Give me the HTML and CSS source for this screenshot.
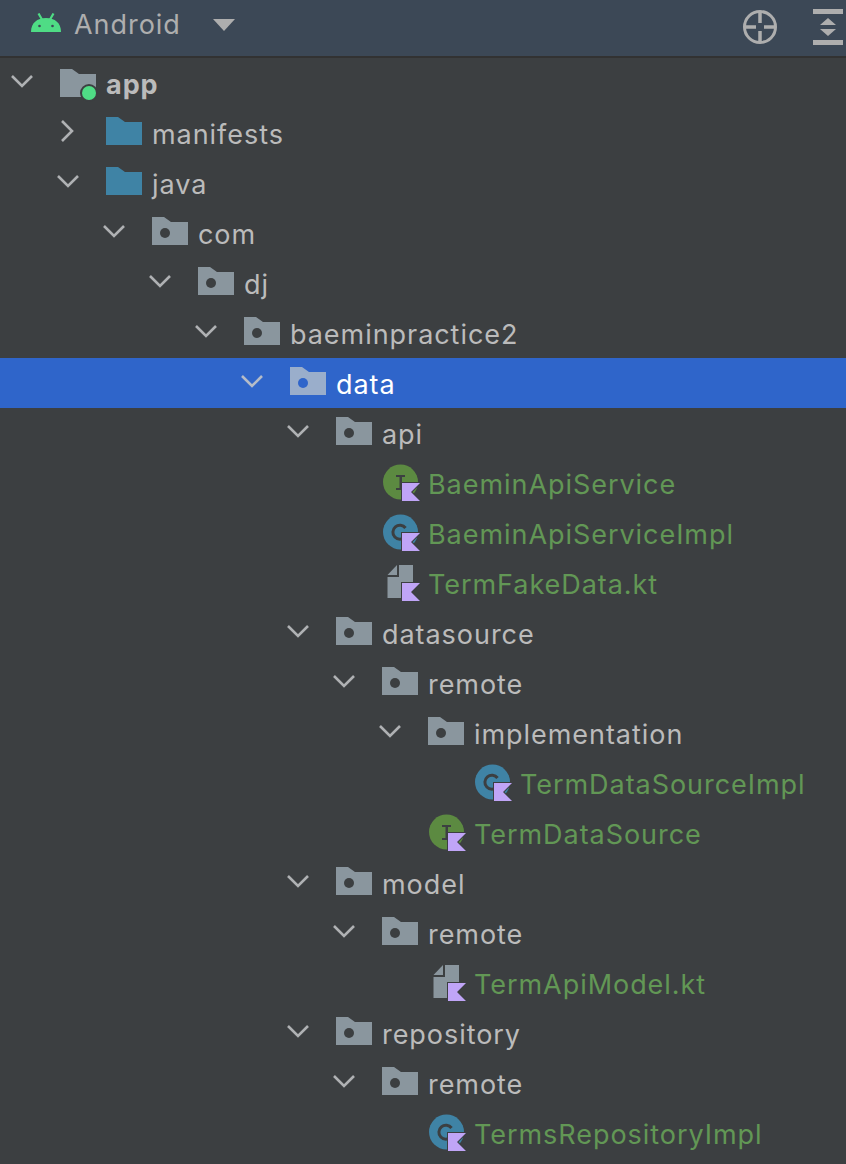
FILE: index.html
```html
<!DOCTYPE html>
<html lang="en">
<head>
<meta charset="utf-8">
<title>Project</title>
<link rel="stylesheet" href="styles.css">
</head>
<body>
<svg class="defs" width="0" height="0" aria-hidden="true">
  <defs>
    <symbol id="chev-down" viewBox="0 0 24 14"><path d="M2 2L12 12L22 2" fill="none" stroke="currentColor" stroke-width="2.6"/></symbol>
    <symbol id="chev-right" viewBox="0 0 24 24"><path d="M6 2L16 12L6 22" fill="none" stroke="currentColor" stroke-width="2.6"/></symbol>
    <symbol id="folder-shape" viewBox="0 0 36 28"><path d="M0 0H12L19 5H36V28H0Z" fill="currentColor"/></symbol>
    <symbol id="folder-pkg" viewBox="0 0 36 28"><path d="M0 0H12L19 5H36V28H0Z" fill="currentColor"/><circle cx="13" cy="16" r="5" fill="var(--dot)"/></symbol>
    <symbol id="kt" viewBox="0 0 40 40"><path d="M20 20H38L29 29L38 38H20Z" fill="#c0a5f7" stroke="#3c3f41" stroke-width="2" paint-order="stroke"/></symbol>
    <symbol id="i-iface" viewBox="0 0 40 40">
      <circle cx="18.5" cy="19" r="17.5" fill="#5c8a41"/>
      <path d="M14 12H23V14H20V25H22V27H14V25H17.500V14H14Z" fill="#3c3f41"/>
      <use href="#kt"/>
    </symbol>
    <symbol id="i-class" viewBox="0 0 40 40">
      <circle cx="18.5" cy="19" r="17.5" fill="#3f83a5"/>
      <path d="M23.500 15A7 7 0 1 0 23 24" fill="none" stroke="#3c3f41" stroke-width="3"/>
      <use href="#kt"/>
    </symbol>
    <symbol id="i-file" viewBox="0 0 40 40">
      <path d="M5.500 12L15 2V12Z" fill="#8a969e"/>
      <path d="M17 2H31V21H20V35H5.500V14H17Z" fill="#8a969e"/>
      <use href="#kt"/>
    </symbol>
  </defs>
</svg>

<header class="bar">
  <div class="bar-left">
    <svg class="android" viewBox="0 0 30 19" aria-hidden="true">
      <path d="M7.500 0.500L11 6.500M22.500 0.500L19 6.500" stroke="#4fdc85" stroke-width="2.200" fill="none"/>
      <path d="M0 19C0 10 6 5 15 5S30 10 30 19Z" fill="#4fdc85"/>
      <circle cx="8.500" cy="13" r="1.300" fill="#3c4856"/><circle cx="21.500" cy="13" r="1.300" fill="#3c4856"/>
    </svg>
    <span class="bar-title">Android</span>
    <svg class="caret" viewBox="0 0 22 12" aria-hidden="true"><path d="M0 0H22L11 12Z" fill="#aeaeae"/></svg>
  </div>
  <div class="bar-right">
    <svg class="locate" viewBox="0 0 36 36" aria-hidden="true">
      <circle cx="18" cy="18" r="15.500" fill="none" stroke="#aeaeae" stroke-width="3"/>
      <path d="M18 3V14M18 22V33M3 18H14M22 18H33" stroke="#aeaeae" stroke-width="3.500"/>
    </svg>
    <svg class="collapse" viewBox="0 0 30 36" aria-hidden="true">
      <path d="M0 0H30V5H0ZM0 31H30V36H0Z" fill="#aeaeae"/>
      <path d="M15 9L23 16H7ZM15 27L7 20H23Z" fill="#aeaeae"/>
    </svg>
  </div>
</header>

<ul class="tree">
  <li class="row d0"><svg class="chev"><use href="#chev-down"/></svg><svg class="folder module"><use href="#folder-shape"/></svg><span class="name bold">app</span><span class="module-dot"></span></li>
  <li class="row d1"><svg class="chev right"><use href="#chev-right"/></svg><svg class="folder src"><use href="#folder-shape"/></svg><span class="name">manifests</span></li>
  <li class="row d1"><svg class="chev"><use href="#chev-down"/></svg><svg class="folder src"><use href="#folder-shape"/></svg><span class="name">java</span></li>
  <li class="row d2"><svg class="chev"><use href="#chev-down"/></svg><svg class="folder"><use href="#folder-pkg"/></svg><span class="name">com</span></li>
  <li class="row d3"><svg class="chev"><use href="#chev-down"/></svg><svg class="folder"><use href="#folder-pkg"/></svg><span class="name">dj</span></li>
  <li class="row d4"><svg class="chev"><use href="#chev-down"/></svg><svg class="folder"><use href="#folder-pkg"/></svg><span class="name">baeminpractice2</span></li>
  <li class="row d5 selected"><svg class="chev"><use href="#chev-down"/></svg><svg class="folder"><use href="#folder-pkg"/></svg><span class="name">data</span></li>
  <li class="row d6"><svg class="chev"><use href="#chev-down"/></svg><svg class="folder"><use href="#folder-pkg"/></svg><span class="name">api</span></li>
  <li class="row d7 leaf"><svg class="file"><use href="#i-iface"/></svg><span class="name vcs">BaeminApiService</span></li>
  <li class="row d7 leaf"><svg class="file"><use href="#i-class"/></svg><span class="name vcs">BaeminApiServiceImpl</span></li>
  <li class="row d7 leaf"><svg class="file"><use href="#i-file"/></svg><span class="name vcs">TermFakeData.kt</span></li>
  <li class="row d6"><svg class="chev"><use href="#chev-down"/></svg><svg class="folder"><use href="#folder-pkg"/></svg><span class="name">datasource</span></li>
  <li class="row d7"><svg class="chev"><use href="#chev-down"/></svg><svg class="folder"><use href="#folder-pkg"/></svg><span class="name">remote</span></li>
  <li class="row d8"><svg class="chev"><use href="#chev-down"/></svg><svg class="folder"><use href="#folder-pkg"/></svg><span class="name">implementation</span></li>
  <li class="row d9 leaf"><svg class="file"><use href="#i-class"/></svg><span class="name vcs">TermDataSourceImpl</span></li>
  <li class="row d8 leaf"><svg class="file"><use href="#i-iface"/></svg><span class="name vcs">TermDataSource</span></li>
  <li class="row d6"><svg class="chev"><use href="#chev-down"/></svg><svg class="folder"><use href="#folder-pkg"/></svg><span class="name">model</span></li>
  <li class="row d7"><svg class="chev"><use href="#chev-down"/></svg><svg class="folder"><use href="#folder-pkg"/></svg><span class="name">remote</span></li>
  <li class="row d8 leaf"><svg class="file"><use href="#i-file"/></svg><span class="name vcs">TermApiModel.kt</span></li>
  <li class="row d6"><svg class="chev"><use href="#chev-down"/></svg><svg class="folder"><use href="#folder-pkg"/></svg><span class="name">repository</span></li>
  <li class="row d7"><svg class="chev"><use href="#chev-down"/></svg><svg class="folder"><use href="#folder-pkg"/></svg><span class="name">remote</span></li>
  <li class="row d8 leaf"><svg class="file"><use href="#i-class"/></svg><span class="name vcs">TermsRepositoryImpl</span></li>
</ul>
</body>
</html>
```

FILE: styles.css
```css
* { box-sizing: border-box; }
html, body { margin: 0; height: 100%; overflow: hidden; }
body {
  background: #3c3f41;
  color: #bbbbbb;
  font-family: "Inter", "Liberation Sans", sans-serif;
  font-size: 27px;
  letter-spacing: 0.95px;
  --dot: #3c3f41;
}
.defs { position: absolute; }

.bar {
  height: 58px;
  background: #3c4856;
  border-bottom: 2px solid #323232;
  display: flex;
  align-items: center;
  justify-content: space-between;
  padding: 0 3px 8px 31px;
}
.bar-left { display: flex; align-items: center; }
.android { width: 30px; height: 19px; margin-top: -3px; }
.bar-title { margin-left: 13px; color: #aeaeae; }
.caret { width: 22px; height: 12px; margin: 2px 0 0 32px; }
.bar-right { display: flex; align-items: center; gap: 35px; margin-top: 5px; }
.locate { width: 36px; height: 36px; }
.collapse { width: 30px; height: 36px; }

.tree { list-style: none; margin: 0; padding: 0; }
.row { height: 50px; display: flex; align-items: center; position: relative; }
.d0 { padding-left: 0; }
.d1 { padding-left: 46px; }
.d2 { padding-left: 92px; }
.d3 { padding-left: 138px; }
.d4 { padding-left: 184px; }
.d5 { padding-left: 230px; }
.d6 { padding-left: 276px; }
.d7 { padding-left: 322px; }
.d8 { padding-left: 368px; }
.d9 { padding-left: 414px; }

.chev { width: 24px; height: 14px; margin: -4px 26px 0 10px; color: #afb1b3; flex: none; }
.chev.right { width: 24px; height: 24px; }
.folder { width: 36px; height: 28px; margin: -4px 10px 0 0; color: #8a969e; flex: none; }
.folder.src { color: #3f83a5; }
.folder.module { color: #8a969e; margin-top: 0; }
.file { width: 40px; height: 40px; margin: 0 6px 0 60px; flex: none; }
.name { white-space: nowrap; margin-top: 2px; }
.name.bold { font-weight: 700; }
.name.vcs { color: #629755; }
.module-dot {
  position: absolute;
  left: 82px;
  top: 28px;
  width: 14px;
  height: 14px;
  border-radius: 50%;
  background: #4fdc85;
  box-shadow: 0 0 0 2px #3c3f41;
}
.selected { background: #2f65ca; color: #fff; --dot: #2f65ca; }
.selected .folder { color: #9aaecb; }
.selected .chev { color: #b5bcc8; }
```
